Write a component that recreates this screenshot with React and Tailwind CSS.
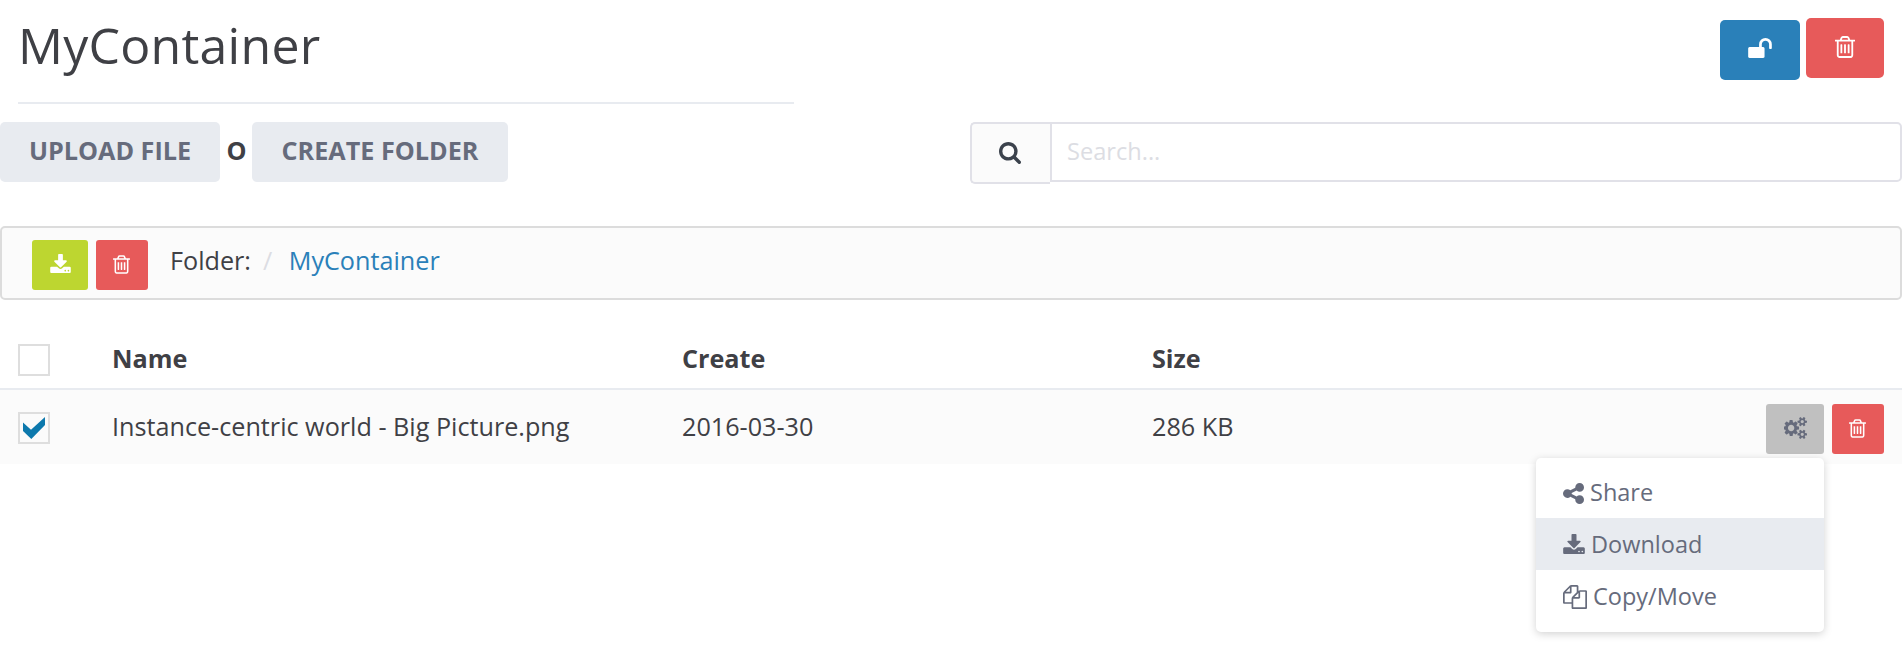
const PATHS = {
  trash: {
    box: "192 128 1408 1536",
    d: "M704 736v576q0 14-9 23t-23 9h-64q-14 0-23-9t-9-23v-576q0-14 9-23t23-9h64q14 0 23 9t9 23zm256 0v576q0 14-9 23t-23 9h-64q-14 0-23-9t-9-23v-576q0-14 9-23t23-9h64q14 0 23 9t9 23zm256 0v576q0 14-9 23t-23 9h-64q-14 0-23-9t-9-23v-576q0-14 9-23t23-9h64q14 0 23 9t9 23zm128 724v-948h-896v948q0 22 7 40.5t14.5 27 10.5 8.5h832q3 0 10.5-8.5t14.5-27 7-40.5zm-672-1076h448l-48-117q-7-9-17-11h-317q-10 2-17 11zm928 32v64q0 14-9 23t-23 9h-96v948q0 83-47 143.5t-113 60.5h-832q-66 0-113-58.5t-47-141.5v-952h-96q-14 0-23-9t-9-23v-64q0-14 9-23t23-9h309l70-167q15-37 54-63t79-26h320q40 0 79 26t54 63l70 167h309q14 0 23 9t9 23z",
  },
  download: {
    box: "64 0 1664 1536",
    d: "M1344 1344q0-26-19-45t-45-19-45 19-19 45 19 45 45 19 45-19 19-45zm256 0q0-26-19-45t-45-19-45 19-19 45 19 45 45 19 45-19 19-45zm128-224v320q0 40-28 68t-68 28h-1472q-40 0-68-28t-28-68v-320q0-40 28-68t68-28h465l135 136q58 56 136 56t136-56l136-136h464q40 0 68 28t28 68zm-325-569q17 41-14 70l-448 448q-18 19-45 19t-45-19l-448-448q-31-29-14-70 17-39 59-39h256v-448q0-26 19-45t45-19h256q26 0 45 19t19 45v448h256q42 0 59 39z",
  },
  share: {
    box: "128 128 1536 1536",
    d: "M1344 1024q133 0 226.5 93.5t93.5 226.5-93.5 226.5-226.5 93.5-226.5-93.5-93.5-226.5q0-12 2-34l-360-180q-92 86-218 86-133 0-226.5-93.5t-93.5-226.5 93.5-226.5 226.5-93.5q126 0 218 86l360-180q-2-22-2-34 0-133 93.5-226.5t226.5-93.5 226.5 93.5 93.5 226.5-93.5 226.5-226.5 93.5q-126 0-218-86l-360 180q2 22 2 34t-2 34l360 180q92-86 218-86z",
  },
  search: {
    box: "64 128 1664 1664",
    d: "M1216 832q0-185-131.5-316.5t-316.5-131.5-316.5 131.5-131.5 316.5 131.5 316.5 316.5 131.5 316.5-131.5 131.5-316.5zm512 832q0 52-38 90t-90 38q-54 0-90-38l-343-342q-179 124-399 124-143 0-273.5-55.5t-225-150-150-225-55.5-273.5 55.5-273.5 150-225 225-150 273.5-55.5 273.5 55.5 225 150 150 225 55.5 273.5q0 220-124 399l343 343q37 37 37 90z",
  },
  copy: {
    box: "0 0 1792 1792",
    d: "M1696 384q40 0 68 28t28 68v1216q0 40-28 68t-68 28h-960q-40 0-68-28t-28-68v-288h-544q-40 0-68-28t-28-68v-672q0-40 20-88t48-76l408-408q28-28 76-48t88-20h416q40 0 68 28t28 68v328q68-40 128-40h416zm-544 213l-299 299h299v-299zm-640-384l-299 299h299v-299zm196 647l316-316v-416h-384v416q0 40-28 68t-68 28h-416v640h512v-256q0-40 20-88t48-76zm956 804v-1152h-384v416q0 40-28 68t-68 28h-416v640h896z",
  },
  unlock: {
    box: "64 128 1664 1408",
    d: "M1728 576v256q0 26-19 45t-45 19h-64q-26 0-45-19t-19-45v-256q0-106-75-181t-181-75-181 75-75 181v192h96q40 0 68 28t28 68v576q0 40-28 68t-68 28h-960q-40 0-68-28t-28-68v-576q0-40 28-68t68-28h672v-192q0-185 131.5-316.5t316.5-131.5 316.5 131.5 131.5 316.5z",
  },
  cogs: {
    box: "0 16 1856 1760",
    d: "M832 896q0-106-75-181t-181-75-181 75-75 181 75 181 181 75 181-75 75-181zm768 512q0-52-38-90t-90-38-90 38-38 90q0 53 37.5 90.5t90.5 37.5 90.5-37.5 37.5-90.5zm0-1024q0-52-38-90t-90-38-90 38-38 90q0 53 37.5 90.5t90.5 37.5 90.5-37.5 37.5-90.5zm-384 421v185q0 10-7 19.5t-16 10.5l-155 24q-11 35-32 76 34 48 90 115 7 11 7 20 0 12-7 19-23 30-82.5 89.5t-78.5 59.5q-11 0-21-7l-115-90q-37 19-77 31-11 108-23 155-7 24-30 24h-186q-11 0-20-7.5t-10-17.5l-23-153q-34-10-75-31l-118 89q-7 7-20 7-11 0-21-8-144-133-144-160 0-9 7-19 10-14 41-53t47-61q-23-44-35-82l-152-24q-10-1-17-9.5t-7-19.5v-185q0-10 7-19.5t16-10.5l155-24q11-35 32-76-34-48-90-115-7-11-7-20 0-12 7-20 22-30 82-89t79-59q11 0 21 7l115 90q34-18 77-32 11-108 23-154 7-24 30-24h186q11 0 20 7.5t10 17.5l23 153q34 10 75 31l118-89q8-7 20-7 11 0 21 8 144 133 144 160 0 8-7 19-12 16-42 54t-45 60q23 48 34 82l152 23q10 2 17 10.5t7 19.5zm640 533v140q0 16-149 31-12 27-30 52 51 113 51 138 0 4-4 7-122 71-124 71-8 0-46-47t-52-68q-20 2-30 2t-30-2q-14 21-52 68t-46 47q-2 0-124-71-4-3-4-7 0-25 51-138-18-25-30-52-149-15-149-31v-140q0-16 149-31 13-29 30-52-51-113-51-138 0-4 4-7 4-2 35-20t59-34 30-16q8 0 46 46.5t52 67.5q20-2 30-2t30 2q51-71 92-112l6-2q4 0 124 70 4 3 4 7 0 25-51 138 17 23 30 52 149 15 149 31zm0-1024v140q0 16-149 31-12 27-30 52 51 113 51 138 0 4-4 7-122 71-124 71-8 0-46-47t-52-68q-20 2-30 2t-30-2q-14 21-52 68t-46 47q-2 0-124-71-4-3-4-7 0-25 51-138-18-25-30-52-149-15-149-31v-140q0-16 149-31 13-29 30-52-51-113-51-138 0-4 4-7 4-2 35-20t59-34 30-16q8 0 46 46.5t52 67.5q20-2 30-2t30 2q51-71 92-112l6-2q4 0 124 70 4 3 4 7 0 25-51 138 17 23 30 52 149 15 149 31z",
  },
};

function Icon({ name, className }) {
  const { box, d } = PATHS[name];
  return (
    <svg viewBox={box} fill="currentColor" className={"block shrink-0 " + className} aria-hidden="true">
      <path d={d} />
    </svg>
  );
}

function IconButton({ icon, label, className, iconClass }) {
  return (
    <button aria-label={label} className={"flex shrink-0 items-center justify-center " + className}>
      <Icon name={icon} className={iconClass} />
    </button>
  );
}

function Checkbox({ checked }) {
  return (
    <span role="checkbox" aria-checked={checked} className="flex size-8 items-center justify-center border-2 border-[#dedede]">
      {checked && (
        <svg viewBox="0 0 22 22" className="size-[22px] fill-[#0d79ad]" aria-hidden="true">
          <path d="M0 5.5L8 12.8L22 0V8L8.3 22L0 14Z" />
        </svg>
      )}
    </span>
  );
}

const COLUMNS = "grid grid-cols-[94px_570px_470px_1fr] items-center pl-[18px] pr-[18px]";

export default function App() {
  return (
    <div className="h-[660px] w-[1902px] overflow-hidden bg-white font-['Open_Sans',sans-serif] text-[25.2px] leading-9 text-[#3f4045]">
      <header className="flex h-[104px] items-start justify-between px-[18px]">
        <h1 className="h-[104px] w-[776px] border-b-2 border-[#e8ebf0] pt-[11px] text-[50px] leading-[68px] tracking-[0.25px]">MyContainer</h1>
        <div className="flex gap-1.5 pt-[18px] text-white">
          <IconButton icon="unlock" label="Unlock" className="mt-0.5 h-[60px] w-20 rounded-[5px] bg-[#2a80b9]" iconClass="-mt-1 h-5 w-6" />
          <IconButton icon="trash" label="Delete container" className="h-[60px] w-[78px] rounded-[5px] bg-[#e75a5a]" iconClass="-mt-0.5 h-[22px] w-[20px]" />
        </div>
      </header>

      <div className="flex justify-between pt-[18px]">
        <div className="flex h-[60px] font-bold">
          <button className="w-[220px] rounded-[5px] bg-[#e8ebf0] pb-1 text-[#666b7c]">UPLOAD FILE</button>
          <span className="w-8 pt-2.5 pl-px text-center">O</span>
          <button className="w-64 rounded-[5px] bg-[#e8ebf0] pb-1 text-[#666b7c]">CREATE FOLDER</button>
        </div>
        <div className="flex w-[932px] items-start">
          <span className="flex h-[62px] w-20 items-center justify-center rounded-l-[5px] border-2 border-r-0 border-[#e1e1e8] bg-[#fbfbfb] text-[#3b424c]">
            <Icon name="search" className="mr-0.5 mb-px size-[22px]" />
          </span>
          <input aria-label="Search" placeholder="Search..." className="h-[60px] flex-1 rounded-r-[5px] border-2 border-[#e1e1e8] bg-white px-[15px] pb-[3px] text-[23.6px] placeholder:text-[#dcdde3]" />
        </div>
      </div>

      <nav className="mt-[42px] flex h-[74px] rounded-[5px] border-2 border-[#dcdcdc] bg-[#fbfbfb] pt-3 pl-[30px]">
        <IconButton icon="download" label="Download selected" className="h-[50px] w-14 rounded-[3px] bg-[#bdd630] text-white" iconClass="-mt-1 h-[19px] w-[21px]" />
        <IconButton icon="trash" label="Delete selected" className="ml-2 h-[50px] w-[52px] rounded-[3px] bg-[#e75a5a] text-white" iconClass="mr-px mb-px h-[19px] w-[17px]" />
        <span className="ml-[22px] pt-0.5">Folder:</span>
        <span className="ml-[12px] pt-0.5 text-[#dcdde3]">/</span>
        <a className="ml-[16.5px] pt-0.5 text-[#2a80b9]">MyContainer</a>
      </nav>

      <div>
        <div className={"mt-7 h-[62px] border-b-2 border-[#e8ebf0] pt-1 font-bold " + COLUMNS}>
          <Checkbox checked={false} />
          <span className="pb-[5px]">Name</span>
          <span className="pb-[5px]">Create</span>
          <span className="pb-[5px]">Size</span>
        </div>
        <div className={"relative h-[74px] bg-[#fbfbfb] pt-1 pb-2 " + COLUMNS}>
          <div className="pt-1.5">
            <Checkbox checked />
          </div>
          <span className="pt-0.5">Instance-centric world - Big Picture.png</span>
          <span className="pt-0.5">2016-03-30</span>
          <span className="pt-0.5">286 KB</span>
          <div className="absolute top-3.5 right-[18px] flex gap-2">
            <IconButton icon="cogs" label="Actions" className="h-[50px] w-[58px] rounded-[3px] bg-[#c0c0c0] text-[#666b7c]" iconClass="mb-0.5 h-[22px] w-[23px]" />
            <IconButton icon="trash" label="Delete file" className="h-[50px] w-[52px] rounded-[3px] bg-[#e75a5a] text-white" iconClass="mr-px mb-px h-[19px] w-[17px]" />
          </div>
          <div className="absolute top-[68px] right-[78px] h-[174px] w-72 rounded-[5px] bg-white pt-2 text-[23.5px] text-[#666b7c] shadow-[0_2px_8px_rgba(0,0,0,0.18)]">
            <div className="flex h-[52px] items-center pl-[27px]">
              <Icon name="share" className="mt-0.5 mr-1.5 size-[21px]" />
              <span>Share</span>
            </div>
            <div className="flex h-[52px] items-center bg-[#e8ebf0] pl-[27px]">
              <Icon name="download" className="mr-1.5 h-5 w-[22px]" />
              <span>Download</span>
            </div>
            <div className="flex h-[52px] items-center pl-[27px]">
              <Icon name="copy" className="mt-0.5 mr-1.5 size-6" />
              <span>Copy/Move</span>
            </div>
          </div>
        </div>
      </div>
    </div>
  );
}
